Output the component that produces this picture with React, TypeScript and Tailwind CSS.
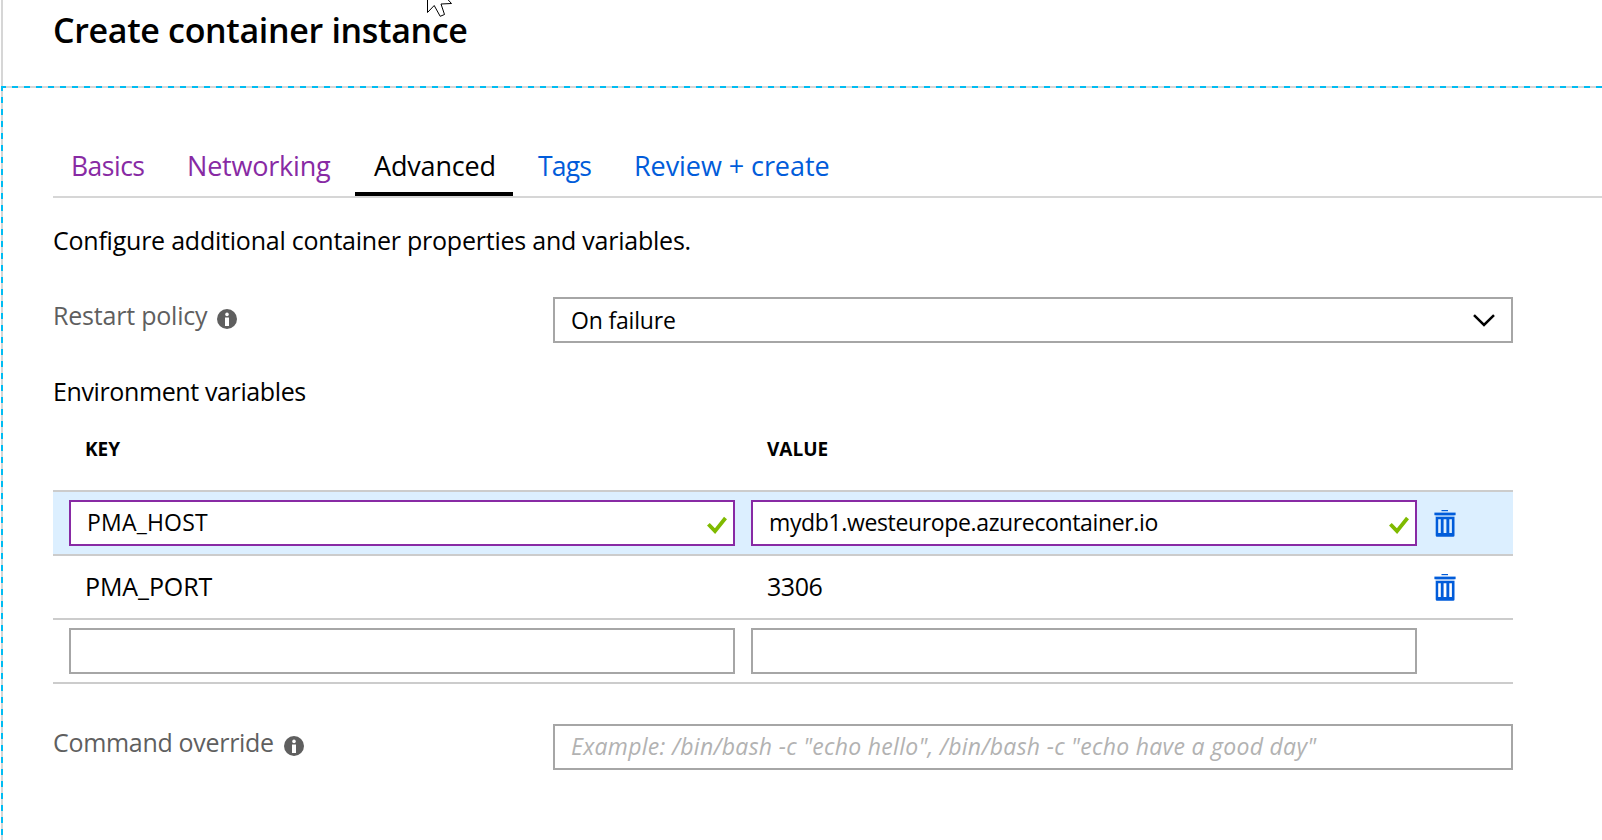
import React from "react";
import clsx from "clsx";

const TABS = [
  { label: "Basics", className: "w-[109px] pl-[18px] text-[26.5px] tracking-[-0.5px] text-[#882aa4]" },
  { label: "Networking", className: "w-[181px] pl-[19px] text-[27px] tracking-[-0.2px] text-[#882aa4]" },
  { label: "Advanced", active: true, className: "w-[158px] pl-[19px] text-[27px] tracking-[-0.17px] text-black" },
  { label: "Tags", className: "w-[90px] pl-[19px] text-[26.5px] tracking-[-0.8px] text-[#015cda]" },
  { label: "Review + create", className: "pl-[19px] text-[27px] tracking-[-0.07px] text-[#015cda]" },
];

function InfoIcon({ className }: { className?: string }) {
  return (
    <svg viewBox="0 0 20 20" className={clsx("h-5 w-5 shrink-0", className)} aria-hidden="true">
      <circle cx="10" cy="10" r="10" fill="#5f5f5f" />
      <circle cx="10" cy="5.4" r="1.8" fill="#fff" />
      <path d="M8 8.5h4V17H8z" fill="#fff" />
    </svg>
  );
}

function CheckIcon() {
  return (
    <svg viewBox="0 0 20 18" className="h-[18px] w-5 shrink-0" aria-hidden="true">
      <path d="M1.4 8.2 8 15.1 18.5 2" fill="none" stroke="#7fba00" strokeWidth="3.8" />
    </svg>
  );
}

function TrashIcon() {
  return (
    <svg viewBox="0 0 22 27" className="h-[27px] w-[22px] shrink-0" aria-hidden="true">
      <g fill="#015cda">
        <rect x="7.5" y="0" width="6.5" height="1.2" />
        <rect x="0.4" y="2.6" width="21.2" height="2.6" />
        <rect x="1.5" y="5.2" width="19" height="1.8" opacity="0.3" />
        <path
          fillRule="evenodd"
          d="M1.7 7h18.8v18.5q0 1.3-1.3 1.3H3q-1.3 0-1.3-1.3zM4.2 9.2V23H6.8V9.2zM9.6 9.2V23h2.8V9.2zM15.3 9.2V23h2.6V9.2z"
        />
      </g>
    </svg>
  );
}

function TextBox({ children, valid, className }: { children?: React.ReactNode; valid?: boolean; className?: string }) {
  return (
    <div
      className={clsx(
        "flex h-[46px] w-[666px] items-center justify-between border-2 bg-white pr-1.5 text-[23px]",
        valid ? "border-[#882aa4]" : "border-[#a6a6a6]",
        className,
      )}
    >
      <span className="pb-0.5 pl-[16px] leading-8">{children}</span>
      {valid && (
        <span className="pt-1">
          <CheckIcon />
        </span>
      )}
    </div>
  );
}

export default function App() {
  return (
    <div className="relative flex h-[840px] w-[1602px] flex-col overflow-hidden bg-white pl-px font-['Open_Sans',sans-serif] text-black">
      <header className="h-[86px] shrink-0 border-l-2 border-[#d6d6d6] pt-[7px] pl-[50px]">
        <h1 className="text-[34px] leading-[46px] font-semibold tracking-[-0.33px] whitespace-nowrap">
          Create container instance
        </h1>
      </header>
      <div className="h-0.5 shrink-0 bg-[repeating-linear-gradient(90deg,#00bcf2_0_6px,#d6d6d6_6px_12px)] bg-[position:-1px_0]" />

      <div className="flex grow">
        <div className="w-0.5 shrink-0 bg-[repeating-linear-gradient(180deg,#00bcf2_0_3px,#d6d6d6_3px_9px,#00bcf2_9px_12px)]" />

        <main className="flex grow flex-col pl-[50px]">
          <nav className="mt-[60px] flex h-[50px] shrink-0 border-b-2 border-[#d6d6d6]">
            {TABS.map((tab) => (
              <span
                key={tab.label}
                className={clsx(
                  "mr-1.5 h-12 leading-9 whitespace-nowrap",
                  tab.active && "border-b-4 border-black",
                  tab.className,
                )}
              >
                {tab.label}
              </span>
            ))}
          </nav>

          <p className="mt-[25px] text-[25px] leading-[34px] tracking-[-0.23px] whitespace-nowrap">
            Configure additional container properties and variables.
          </p>

          <div className="mt-10 flex h-[46px]">
            <div className="flex w-[500px] items-start">
              <span className="w-[164px] shrink-0 pt-px text-[25px] leading-[34px] tracking-[-0.21px] text-[#5f5f5f]">
                Restart policy
              </span>
              <InfoIcon className="mt-3" />
            </div>
            <div className="flex w-[960px] items-center justify-between border-2 border-[#a6a6a6] pr-4 pl-4">
              <span className="text-[23px] leading-8 tracking-[-0.18px]">On failure</span>
              <svg viewBox="0 0 22 13" className="h-[13px] w-[22px]" aria-hidden="true">
                <path d="M1 1.2 11 11 21 1.2" fill="none" stroke="#000" strokeWidth="2.5" />
              </svg>
            </div>
          </div>

          <h2 className="mt-[31px] text-[25px] leading-[34px] tracking-[-0.38px]">Environment variables</h2>

          <div className="mt-7 w-[1460px]">
            <div className="flex h-[54px] pl-[32px] text-[19px] leading-[26px] font-bold">
              <span className="w-[682px]">KEY</span>
              <span>VALUE</span>
            </div>

            <div className="flex h-16 items-center gap-4 border-t-2 border-[#ccc] bg-[#dcefff] pl-4">
              <TextBox valid className="tracking-[0.2px]">PMA_HOST</TextBox>
              <TextBox valid className="tracking-[-0.36px]">mydb1.westeurope.azurecontainer.io</TextBox>
              <span className="ml-px">
                <TrashIcon />
              </span>
            </div>

            <div className="flex h-16 items-center border-t-2 border-[#ccc] pl-8 text-[25px]">
              <span className="w-[682px] pb-0.5 leading-[34px] tracking-[-0.1px]">PMA_PORT</span>
              <span className="w-[667px] pb-0.5 leading-[34px] tracking-[-0.45px]">3306</span>
              <TrashIcon />
            </div>

            <div className="flex h-[66px] items-center gap-4 border-y-2 border-[#ccc] pl-4">
              <TextBox />
              <TextBox />
            </div>
          </div>

          <div className="mt-10 flex h-[46px]">
            <div className="flex w-[500px] items-start">
              <span className="w-[231px] shrink-0 pt-px text-[25px] leading-[34px] tracking-[-0.31px] text-[#5f5f5f]">
                Command override
              </span>
              <InfoIcon className="mt-3" />
            </div>
            <div className="flex w-[960px] items-center border-2 border-[#a6a6a6] pl-4">
              <span className="pb-0.5 text-[23px] leading-8 tracking-[0.29px] whitespace-nowrap text-[#b2b2b2] italic">
                Example: /bin/bash -c "echo hello", /bin/bash -c "echo have a good day"
              </span>
            </div>
          </div>
        </main>
      </div>

      <svg viewBox="0 0 28 18" className="absolute top-0 left-[426px] h-[18px] w-7" aria-hidden="true">
        <path d="M1.5-24V12.5L8.2 5.5 14.2 16.3 18.5 14.5 15 4 25.5 3.5 0-24Z" fill="#fff" stroke="#000" strokeWidth="1" />
      </svg>
    </div>
  );
}
